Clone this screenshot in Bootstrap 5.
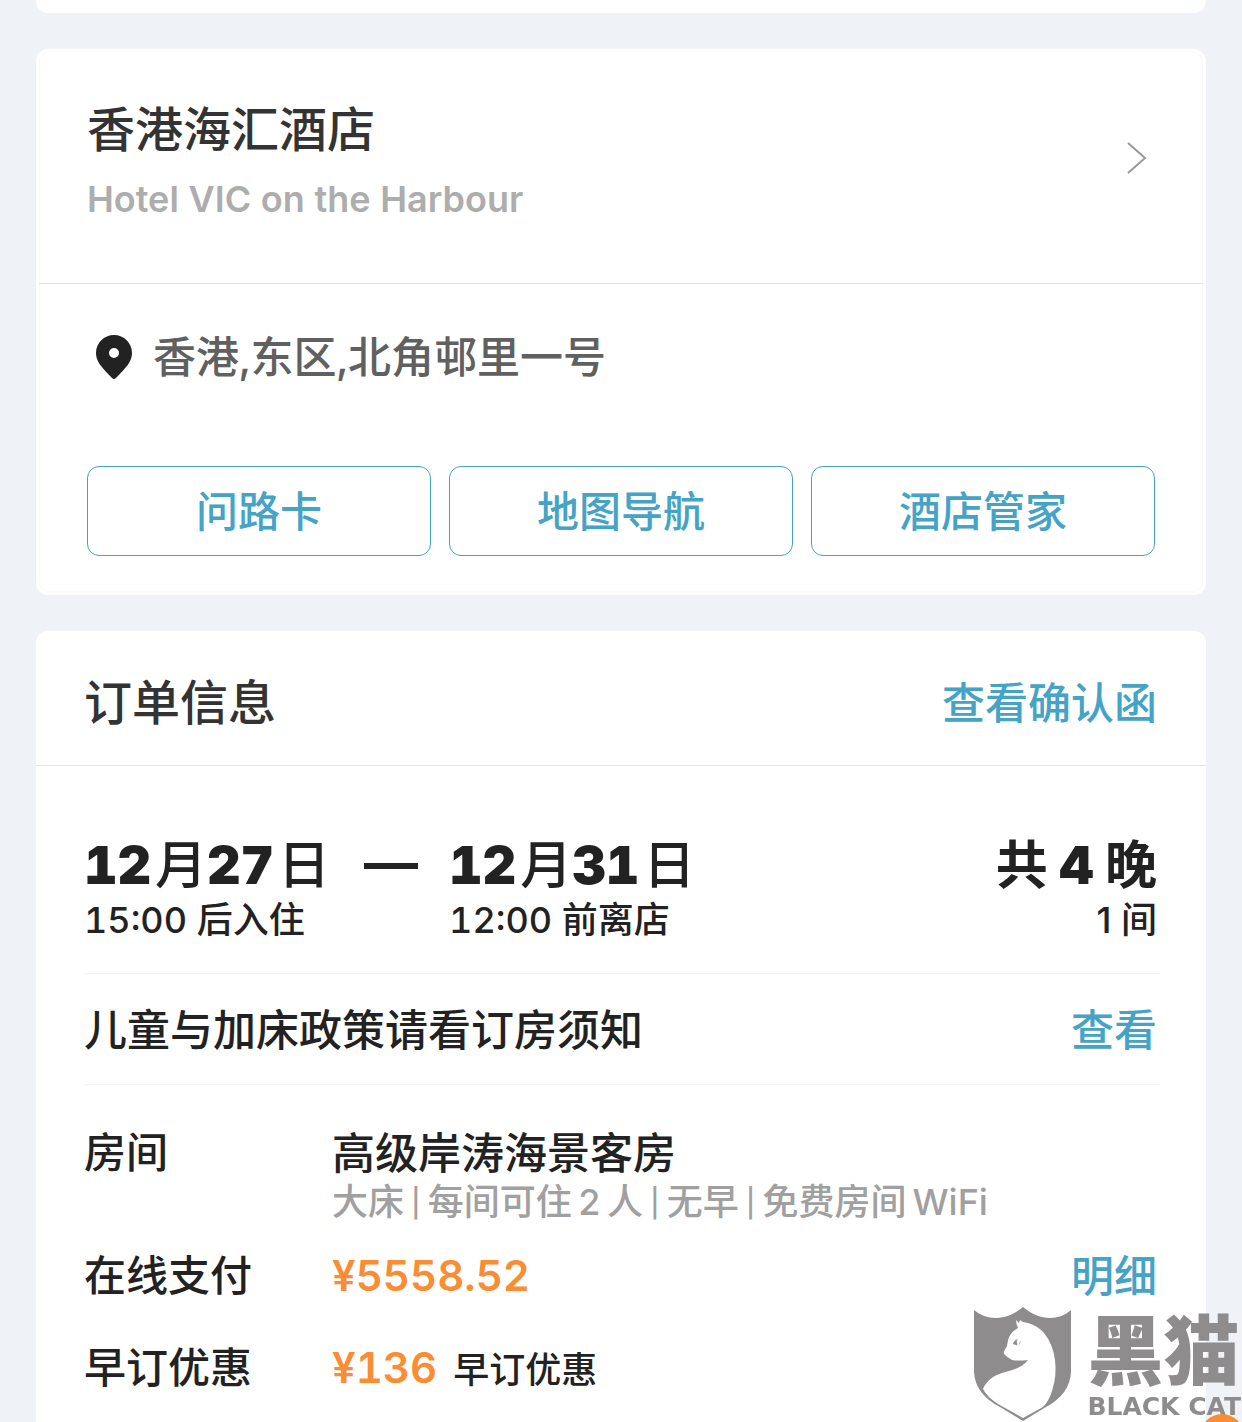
<!DOCTYPE html>
<html lang="zh-CN">
<head>
<meta charset="utf-8">
<meta name="viewport" content="width=device-width, initial-scale=1">
<title>订单详情</title>
<link href="https://cdn.jsdelivr.net/npm/bootstrap@5.3.0/dist/css/bootstrap.min.css" rel="stylesheet">
<style>
  body { background: #eff3f7; color: #222; font-family: Inter, "Noto Sans CJK SC", sans-serif; font-weight: 500; font-size: 43px; line-height: 60px; font-variant-numeric: tabular-nums; }
  .page { padding: 0 36px; min-height: 100vh; overflow: hidden; }
  .stack { gap: 36px; }
  .panel { background: #fff; border-radius: 12px; }
  .panel-prev { height: 13px; border-radius: 0 0 12px 12px; }
  .panel-hotel { border: 3px solid #fff; }
  .hotel-inner { border-radius: 10px; box-shadow: inset 0 0 0 1px #fafafa; }
  .hotel-head { padding: 46px 54px 60px 48px; border-bottom: 1px solid #e4e4e4; color: inherit; }
  .title { font-size: 48px; line-height: 64px; font-weight: 500; color: #333; }
  .subtitle { font-size: 36px; line-height: 48px; font-weight: 600; color: #adadad; margin-top: 13px; }
  .chevron { margin-bottom: 6px; }
  .address { padding: 43px 48px 0 56px; gap: 20px; color: #606060; }
  .actions { padding: 79px 48px 36px; gap: 18px; }
  .btn-act { --bs-btn-color: #45a3c6; --bs-btn-border-color: #45a3c6; --bs-btn-hover-bg: #45a3c6; --bs-btn-hover-color: #fff; height: 90px; border-radius: 12px; font-size: 42px; font-weight: 500; line-height: 60px; padding: 2px 0 0; }
  .order-head { padding: 40px 49px 30px 48px; border-bottom: 1px solid #e4e4e4; }
  .lnk, .lnk:hover { color: #45a3c6; text-decoration: none; }
  .order-body { padding: 70px 47px 60px 48px; }
  .day { font-size: 52px; line-height: 60px; font-weight: 900; }
  .day span { font-weight: 500; margin-left: 4px; }
  .nights { font-variant-numeric: normal; }
  .nights .day span { font-weight: 700; margin: 0; }
  .note { font-size: 36px; line-height: 48px; }
  .dash { width: 54px; height: 6px; background: #222; margin: 27px 31px 0 34px; }
  .stay { padding: 0 2px 29px 0; border-bottom: 1px solid #f3f3f3; }
  .policy { padding: 26px 2px 24px 0; border-bottom: 1px solid #f3f3f3; }
  .details { padding: 43px 2px 0 0; line-height: 50px; }
  .row-room { margin-bottom: 25px; }
  .row-pay { margin-bottom: 42px; }
  .label { width: 248px; flex: none; font-size: 42px; }
  .muted { color: #a0a0a0; }
  .muted span { margin: 0 6px; }
  .muted .bar { font-size: 28px; margin: 0 7px; vertical-align: 2px; line-height: 1; }
  .price { color: #f98d33; font-weight: 600; font-size: 42px; }
  .discount { gap: 16px; }
  .watermark { position: fixed; right: 1px; bottom: 0; color: #8f8c8d; gap: 14px; }
  .wm-cn { font-size: 76px; line-height: 74px; font-weight: 900; margin-bottom: 4px; }
  .wm-en { font-family: "DejaVu Sans", sans-serif; font-size: 25px; line-height: 30px; font-weight: 700; }
  .bubble { position: fixed; right: -2px; bottom: -36px; width: 44px; height: 44px; border-radius: 50%; background: #f98d33; }
</style>
<script src="https://cdn.jsdelivr.net/npm/bootstrap@5.3.0/dist/js/bootstrap.bundle.min.js"></script>
</head>
<body>
<main class="page">
  <div class="stack d-flex flex-column">
    <div class="panel panel-prev"></div>

    <section class="panel panel-hotel">
      <div class="hotel-inner">
        <a href="#" class="hotel-head d-flex justify-content-between align-items-center text-decoration-none">
          <div>
            <h1 class="title mb-0">香港海汇酒店</h1>
            <p class="subtitle mb-0">Hotel VIC on the Harbour</p>
          </div>
          <svg class="chevron" width="22" height="34" viewBox="0 0 22 34" fill="none" stroke="#999" stroke-width="2" aria-hidden="true"><path d="M1 2 18 17 1 32"/></svg>
        </a>
        <div class="address d-flex align-items-center">
          <svg width="38" height="44" viewBox="0 0 38 44" aria-hidden="true"><path fill="#222" fill-rule="evenodd" d="M19 0C9 0 1 8 1 18c0 8 5 14 16 25q2 2 4 0C32 32 37 26 37 18 37 8 29 0 19 0Zm0 13a5 5 0 1 1 0 10 5 5 0 0 1 0-10Z"/></svg>
          <span>香港,东区,北角邨里一号</span>
        </div>
        <div class="actions d-flex">
          <button type="button" class="btn btn-act flex-fill w-100">问路卡</button>
          <button type="button" class="btn btn-act flex-fill w-100">地图导航</button>
          <button type="button" class="btn btn-act flex-fill w-100">酒店管家</button>
        </div>
      </div>
    </section>

    <section class="panel rounded-bottom-0">
      <header class="order-head d-flex justify-content-between align-items-center">
        <h2 class="title mb-0">订单信息</h2>
        <a href="#" class="lnk">查看确认函</a>
      </header>
      <div class="order-body">
        <div class="stay d-flex">
          <div>
            <div class="day">12<span>月</span>27<span>日</span></div>
            <div class="note">15:00 后入住</div>
          </div>
          <div class="dash"></div>
          <div>
            <div class="day">12<span>月</span>31<span>日</span></div>
            <div class="note">12:00 前离店</div>
          </div>
          <div class="nights ms-auto text-end">
            <div class="day"><span>共</span> 4 <span>晚</span></div>
            <div class="note">1 间</div>
          </div>
        </div>
        <div class="policy d-flex justify-content-between">
          <span>儿童与加床政策请看订房须知</span>
          <a href="#" class="lnk">查看</a>
        </div>
        <div class="details d-flex flex-column">
          <div class="row-room d-flex">
            <div class="label">房间</div>
            <div>
              <div>高级岸涛海景客房</div>
              <div class="note muted">大床<span class="bar">|</span>每间可住<span>2</span>人<span class="bar">|</span>无早<span class="bar">|</span>免费房间<span>WiFi</span></div>
            </div>
          </div>
          <div class="row-pay d-flex">
            <div class="label">在线支付</div>
            <div class="price">¥5558.52</div>
            <a href="#" class="lnk ms-auto">明细</a>
          </div>
          <div class="d-flex">
            <div class="label">早订优惠</div>
            <div class="discount d-flex align-items-baseline"><span class="price">¥136</span><span class="note">早订优惠</span></div>
          </div>
        </div>
      </div>
    </section>
  </div>
</main>
<div class="watermark d-flex align-items-end">
  <svg width="100" height="116" viewBox="0 0 100 116" aria-hidden="true">
    <path fill="#8f8c8d" d="M1 4C14 15 34 15 50 1 66 15 86 15 98 4V66Q97 88 73 101L50 115 27 101Q2 88 1 66Z"/>
    <path fill="#fff" d="M43 14 46 17 47 14 50 16 55 17Q65 20 71 27 80 38 82 54 84 70 79 85 76 95 70 101L50 112 25 98Q14 91 10 83C14 74 20 70 29 67S48 63 55 54Q45 55 39 54 34 51 31 48 30 46 34 40C35 33 36 27 45 22Q43 18 43 14Z"/>
    <path fill="#8f8c8d" d="M40 38q1-4 5-5-2 2-1 4t-1 2Zm3 1q4 1 4-5 2 5-4 5Z"/>
  </svg>
  <div>
    <div class="wm-cn">黑猫</div>
    <div class="wm-en">BLACK CAT</div>
  </div>
</div>
<div class="bubble"></div>
</body>
</html>
